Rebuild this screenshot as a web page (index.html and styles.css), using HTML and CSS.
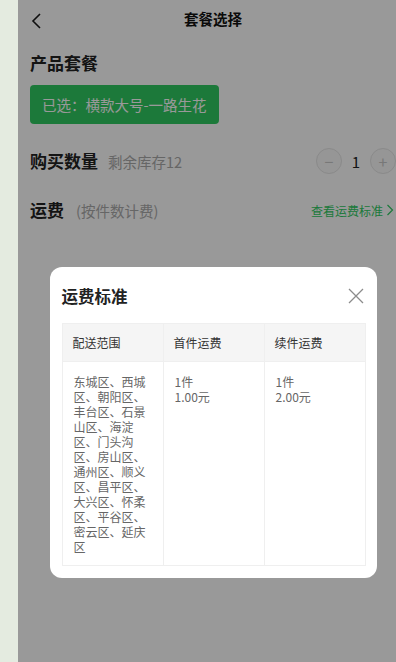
FILE: index.html
```html
<!DOCTYPE html>
<html lang="zh-CN">
<head>
    <meta charset="UTF-8">
    <meta name="viewport" content="width=device-width, initial-scale=1.0">
    <title>套餐选择</title>
    <link rel="stylesheet" href="styles.css">
</head>
<body>
    <div class="frame">
        <div class="strip"></div>
        <div class="phone">
            <header class="nav">
                <span class="back">
                    <svg width="10" height="16" viewBox="0 0 10 16"><path d="M9 1 L2 8 L9 15" fill="none" stroke="#1a1a1a" stroke-width="1.6"/></svg>
                </span>
                <h1>套餐选择</h1>
            </header>

            <section class="block">
                <h2>产品套餐</h2>
                <button class="chosen">已选：横款大号-一路生花</button>
            </section>

            <div class="row qty">
                <h2>购买数量</h2>
                <span class="muted">剩余库存12</span>
                <div class="stepper">
                    <span class="circle">−</span>
                    <span class="num">1</span>
                    <span class="circle">+</span>
                </div>
            </div>

            <div class="row fee">
                <h2>运费</h2>
                <span class="muted">(按件数计费)</span>
                <a class="link">查看运费标准
                    <svg width="8" height="12" viewBox="0 0 8 12"><path d="M1.5 1 L6.5 6 L1.5 11" fill="none" stroke="#30ca62" stroke-width="1.2"/></svg>
                </a>
            </div>

            <div class="mask">
                <div class="dialog">
                    <div class="dialog-head">
                        <h3>运费标准</h3>
                        <svg class="close" width="16" height="16" viewBox="0 0 16 16"><path d="M1 1 L15 15 M15 1 L1 15" stroke="#8c8c8c" stroke-width="1.3"/></svg>
                    </div>
                    <table class="rates">
                        <thead>
                            <tr><th>配送范围</th><th>首件运费</th><th>续件运费</th></tr>
                        </thead>
                        <tbody>
                            <tr>
                                <td>东城区、西城区、朝阳区、丰台区、石景山区、海淀区、门头沟区、房山区、通州区、顺义区、昌平区、大兴区、怀柔区、平谷区、密云区、延庆区</td>
                                <td>1件<br>1.00元</td>
                                <td>1件<br>2.00元</td>
                            </tr>
                        </tbody>
                    </table>
                </div>
            </div>
        </div>
    </div>
</body>
</html>
```

FILE: styles.css
```css
* { margin: 0; padding: 0; box-sizing: border-box; }
html, body { height: 100%; overflow: hidden; }
body { font-family: "Noto Sans CJK SC", "Noto Sans", sans-serif; background: #e4ebe0; color: #222; }

.frame { display: flex; }
.strip { width: 18px; flex: none; }
.phone { position: relative; width: 390px; height: 844px; flex: none; background: #fff; }

.nav { height: 36px; display: flex; align-items: center; justify-content: center; position: relative; }
.nav h1 { font-size: 14.5px; font-weight: bold; color: #111; }
.back { position: absolute; left: 13px; top: 10px; }

.block { padding: 15px 12px 0; }
h2 { font-size: 17px; font-weight: bold; color: #222; line-height: 24px; }
.chosen { margin-top: 10px; height: 39px; padding: 0 12px; border: none; border-radius: 4px; background: #30ca62; color: #fff; font-family: inherit; font-size: 14.5px; }

.row { display: flex; align-items: center; padding: 0 12px; height: 26px; }
.row .muted { margin-left: 10px; font-size: 14.5px; color: #aaa; }
.qty { margin-top: 24px; }
.fee { margin-top: 23px; }
.fee .muted { margin-left: 12px; }

.stepper { margin-left: auto; display: flex; align-items: center; }
.circle { width: 26px; height: 26px; border-radius: 50%; border: 1px solid #e6e6e6; background: #fafafa; color: #c8c8c8; display: flex; align-items: center; justify-content: center; font-size: 16px; line-height: 1; }
.num { width: 28px; text-align: center; font-size: 15px; color: #222; }

.link { margin-left: auto; margin-right: 2px; display: flex; align-items: center; gap: 3px; font-size: 12px; color: #30ca62; }

.mask { position: absolute; inset: 0; background: rgba(0, 0, 0, 0.4); display: flex; align-items: center; justify-content: center; }
.dialog { width: 327px; background: #fff; border-radius: 12px; padding: 0 11px 12px 12px; }
.dialog-head { height: 56px; display: flex; align-items: center; justify-content: space-between; padding-top: 3px; }
.dialog-head h3 { font-size: 16.5px; font-weight: bold; color: #222; }
.close { margin-right: 2px; }

.rates { width: 100%; border-collapse: collapse; table-layout: fixed; font-size: 12px; line-height: 15px; }
.rates th, .rates td { border: 1px solid #efefef; text-align: left; vertical-align: top; }
.rates th { background: #f5f5f5; font-weight: normal; color: #333; padding: 11px 10px; }
.rates td { color: #666; padding: 12px 11px 11px; }
```
